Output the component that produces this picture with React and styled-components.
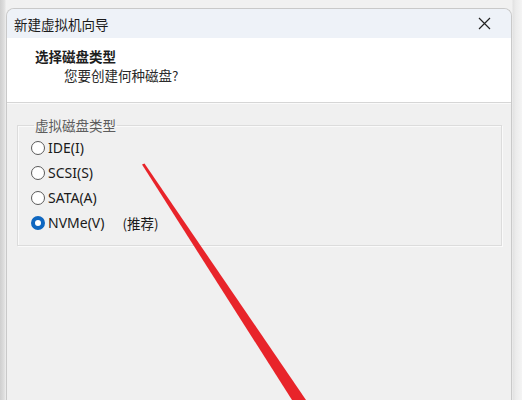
import React from "react";
import styled, { createGlobalStyle } from "styled-components";

const Global = createGlobalStyle`
  html, body { margin: 0; padding: 0; }
  body {
    width: 522px; height: 400px; overflow: hidden;
    font-family: "Noto Sans", "Noto Sans CJK SC", sans-serif;
    background: linear-gradient(to right, #cfcfcf 0px, #dadada 3px, #e4e4e4 5px, #f1f1f1 6px, #f1f1f1 512px, #e2e2e2 513px, #ececec 516px, #f4f4f4 522px);
  }
`;

const Page = styled.div`
  position: relative;
  width: 522px;
  height: 400px;
  padding: 8px 10px 0 6px;
  box-sizing: border-box;
  overflow: hidden;
`;

const Window = styled.div`
  width: 506px;
  height: 420px;
  box-sizing: border-box;
  border: 1px solid #c9c9c9;
  border-bottom: none;
  border-radius: 8px 8px 0 0;
  background: #f0f0f0;
  display: flex;
  flex-direction: column;
  overflow: hidden;
`;

const TitleBar = styled.div`
  height: 29px;
  flex: none;
  background: #eef2f8;
  display: flex;
  align-items: center;
  justify-content: space-between;
  padding: 0 20px 0 7px;
  font-size: 13.5px;
  color: #1b1b1b;
  font-family: "Noto Sans CJK SC", sans-serif;
`;

const Close = styled.svg`
  width: 13px;
  height: 13px;
`;

const Header = styled.div`
  height: 65px;
  flex: none;
  background: #ffffff;
  border-bottom: 1px solid #d6d6d6;
  box-shadow: 0 1px 0 #fafafa;
  display: flex;
  flex-direction: column;
  padding: 9px 0 0 28px;
  box-sizing: border-box;
  font-family: "Noto Sans CJK SC", sans-serif;
  font-size: 13.5px;
  color: #1e1e1e;
`;

const Heading = styled.div`
  font-weight: 700;
  line-height: 18px;
`;

const Sub = styled.div`
  padding-left: 29px;
  line-height: 20px;
  color: #2a2a2a;
`;

const Body = styled.div`
  padding: 14px 9px 0 10px;
`;

const Group = styled.fieldset`
  margin: 0;
  border: 1px solid #dcdcdc;
  box-shadow: inset 1px 1px 0 #fafafa, 1px 1px 0 #fafafa;
  padding: 1px 0 10px 13px;
  display: flex;
  flex-direction: column;
`;

const Legend = styled.legend`
  padding: 0 1px;
  margin-left: 3px;
  font-family: "Noto Sans CJK SC", sans-serif;
  font-size: 13.5px;
  color: #5c5c5c;
  line-height: 17px;
`;

const Row = styled.label`
  display: flex;
  align-items: center;
  height: 25px;
  font-size: 14px;
  color: #1a1a1a;
`;

const Dot = styled.span`
  width: 14px;
  height: 14px;
  box-sizing: border-box;
  border-radius: 50%;
  margin-right: 3px;
  flex: none;
  border: ${(p) => (p.$on ? "4px solid #0f67c0" : "1px solid #5a5a5a")};
  background: #ffffff;
`;

const Note = styled.span`
  margin-left: 18px;
  font-family: "Noto Sans CJK SC", sans-serif;
  font-size: 13.5px;
`;

const Arrow = styled.svg`
  position: absolute;
  left: 0;
  top: 0;
  width: 522px;
  height: 400px;
  pointer-events: none;
`;

const options = [
  { label: "IDE(I)" },
  { label: "SCSI(S)" },
  { label: "SATA(A)" },
  { label: "NVMe(V)", on: true, note: "(推荐)" },
];

export default function App() {
  return (
    <>
      <Global />
      <Page>
        <Window>
          <TitleBar>
            <span>新建虚拟机向导</span>
            <Close viewBox="0 0 13 13">
              <path d="M1 1 L12 12 M12 1 L1 12" stroke="#222" strokeWidth="1.2" fill="none" />
            </Close>
          </TitleBar>
          <Header>
            <Heading>选择磁盘类型</Heading>
            <Sub>您要创建何种磁盘?</Sub>
          </Header>
          <Body>
            <Group>
              <Legend>虚拟磁盘类型</Legend>
              {options.map((o) => (
                <Row key={o.label}>
                  <Dot $on={o.on} />
                  {o.label}
                  {o.note && <Note>{o.note}</Note>}
                </Row>
              ))}
            </Group>
          </Body>
        </Window>
        <Arrow viewBox="0 0 522 400">
          <polygon points="142,164.5 144.5,163.5 306,400 292,400" fill="#e8242a" />
        </Arrow>
      </Page>
    </>
  );
}
